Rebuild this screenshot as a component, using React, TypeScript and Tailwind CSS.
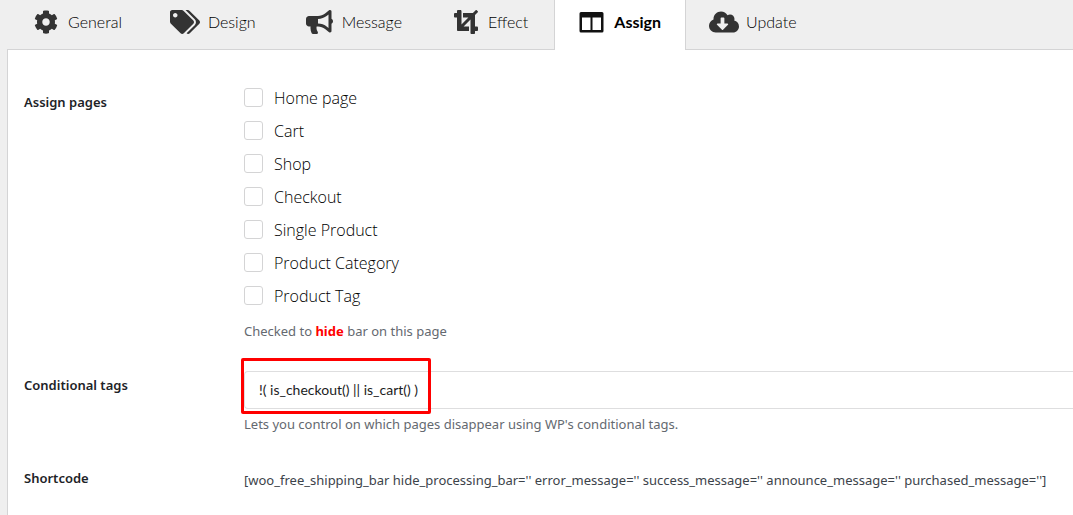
import type { ReactNode } from "react";
import { FaBullhorn, FaCloudDownloadAlt, FaCog, FaCrop, FaTags } from "react-icons/fa";

// Slimmer frame and divider than the stock columns icon
function ColumnsIcon({ className }: { className?: string }) {
  return (
    <svg viewBox="0 0 25 24" fill="currentColor" className={className} aria-hidden="true">
      <path
        fillRule="evenodd"
        d="M2 2h21a1.5 1.5 0 0 1 1.500 1.500v17.500a1.500 1.500 0 0 1-1.500 1.500h-21a1.500 1.500 0 0 1-1.500-1.500v-17.500a1.500 1.500 0 0 1 1.500-1.500zM3 7.500v12.500h8.500v-12.500zM13.500 7.500v12.500h8.500v-12.500z"
      />
    </svg>
  );
}

const tabs = [
  { name: "General", icon: <FaCog className="h-6 w-6 shrink-0" /> },
  { name: "Design", icon: <FaTags className="h-6 w-[30px] shrink-0" /> },
  { name: "Message", icon: <FaBullhorn className="h-6 w-[27px] shrink-0" /> },
  { name: "Effect", icon: <FaCrop className="h-6 w-6 shrink-0" /> },
  { name: "Assign", icon: <ColumnsIcon className="h-6 w-[25px] shrink-0" /> },
  { name: "Update", icon: <FaCloudDownloadAlt className="h-6 w-[30px] shrink-0" /> },
];

const pages = [
  "Home page",
  "Cart",
  "Shop",
  "Checkout",
  "Single Product",
  "Product Category",
  "Product Tag",
];

const shortcode =
  "[woo_free_shipping_bar hide_processing_bar='' error_message='' success_message='' announce_message='' purchased_message='']";

function Tab({ name, icon, active }: { name: string; icon: ReactNode; active: boolean }) {
  return (
    <button
      type="button"
      role="tab"
      aria-selected={active}
      className={
        active
          ? "relative z-10 -mb-px flex items-center gap-2.5 border-x border-[#d4d4d5] bg-white px-6 pt-2.5 pb-4 font-bold text-black"
          : "flex items-center gap-2.5 border-x border-transparent pt-2.5 pr-[25px] pb-[15px] pl-6 font-light text-black"
      }
    >
      <span
        className={
          active
            ? "flex w-[25px] justify-center text-[#111]"
            : "flex w-[25px] justify-center text-[#333]"
        }
      >
        {icon}
      </span>
      {name}
    </button>
  );
}

function Row({ label, children }: { label: ReactNode; children: ReactNode }) {
  return (
    <div className="grid grid-cols-[220px_minmax(0,1fr)]">
      <div className="text-[13px] leading-5 font-semibold text-[#1d2327]">{label}</div>
      <div>{children}</div>
    </div>
  );
}

export default function App() {
  return (
    <div className="flex min-h-screen flex-col overflow-x-hidden bg-[#efefef] pl-[7px] font-['Noto_Sans','Open_Sans',sans-serif]">
      <div role="tablist" className="flex pl-px font-['Lato',sans-serif] text-base leading-6">
        {tabs.map((tab) => (
          <Tab key={tab.name} name={tab.name} icon={tab.icon} active={tab.name === "Assign"} />
        ))}
      </div>

      <form className="flex flex-1 flex-col gap-[30px] border-t border-l border-[#d4d4d5] bg-white pt-[31px] pb-5 pl-4">
        <Row label={<p id="assign-pages" className="pt-[11px]">Assign pages</p>}>
          <div role="group" aria-labelledby="assign-pages">
            {pages.map((page) => (
              <label
                key={page}
                className="flex h-[33px] items-center gap-[11px] font-['Open_Sans',sans-serif] text-base font-light text-black"
              >
                <input
                  type="checkbox"
                  className="size-[19px] appearance-none rounded-[3px] border border-[#d4d4d5] bg-white checked:bg-gray-700"
                />
                {page}
              </label>
            ))}
          </div>
          <p className="mt-[9px] text-[13px] leading-5 text-[#646970]">
            Checked to <strong className="font-bold text-[#f00]">hide</strong> bar on this page
          </p>
        </Row>

        <Row
          label={
            <label htmlFor="conditional-tags" className="block pt-1">
              Conditional tags
            </label>
          }
        >
          <div className="relative">
            <input
              id="conditional-tags"
              type="text"
              defaultValue="!( is_checkout() || is_cart() )"
              className="block h-[38px] w-full rounded-l border border-r-0 border-[#dededf] bg-white px-3.5 pb-0.5 font-['Lato',sans-serif] text-sm text-[#1b1c1d] outline-none"
            />
            <div className="pointer-events-none absolute -top-[13px] -left-[3px] h-14 w-[190px] rounded-xs border-3 border-[#f00]" />
          </div>
          <p className="mt-[5px] text-[13px] leading-5 text-[#646970]">
            Lets you control on which pages disappear using WP's conditional tags.
          </p>
        </Row>

        <Row label={<p className="pt-1">Shortcode</p>}>
          <p className="pt-1.5 text-[13px] leading-5 text-[#3c434a]">{shortcode}</p>
        </Row>
      </form>
    </div>
  );
}
